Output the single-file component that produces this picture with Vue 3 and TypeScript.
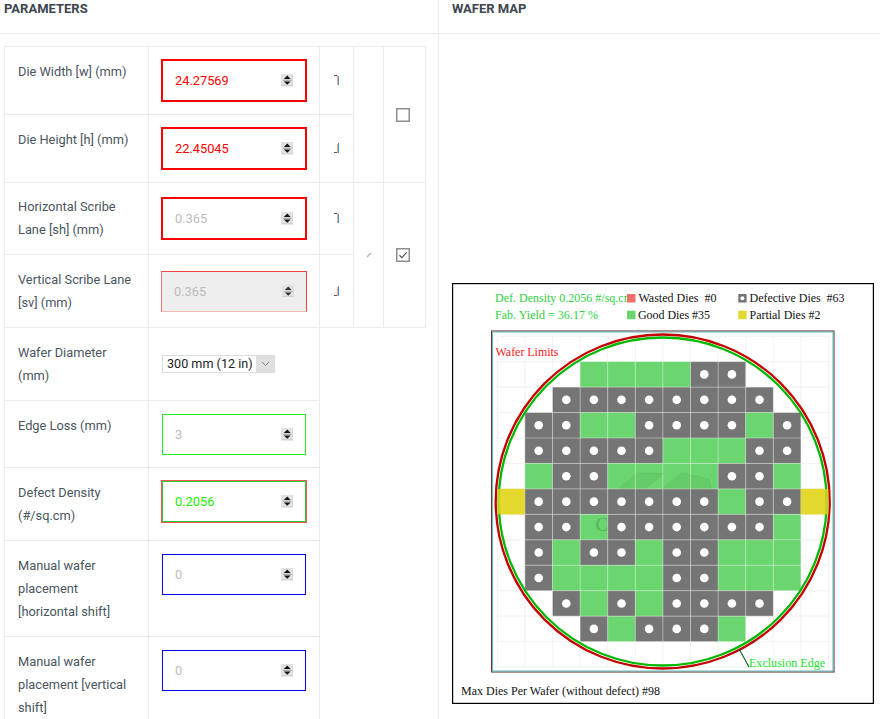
<script setup lang="ts">
type Cell = 'G' | 'D' | 'P' | '.'
const layout: string[] = [
  '............',
  '...GGGGDD...',
  '..DDDDDDDD..',
  '.DDGGDDDDGD.',
  '.DDDDDGGGDD.',
  '.GDDGGGGDDG.',
  'PDDDDDDDGDDP',
  '.DDGDDDDDDG.',
  '.DGDDGDDGGG.',
  '.DGGGGDDGGG.',
  '..DGDGDDDD..',
  '...DGDDDG...',
  '............',
]
const x0 = 497.3
const y0 = 336.2
const pw = 27.6
const ph = 25.45
const fills: Record<string, string> = { G: '#6bd56f', D: '#757575', P: '#e3d92d' }

const cells = layout.flatMap((row, r) =>
  row.split('').flatMap((c, i) =>
    (c as Cell) === '.' ? [] : [{ key: `${r}-${i}`, x: x0 + i * pw, y: y0 + r * ph, type: c, fill: fills[c] }],
  ),
)
const partials = cells.filter((c) => c.type === 'P')
const vLines = Array.from({ length: 13 }, (_, i) => x0 + i * pw)
const hLines = Array.from({ length: 14 }, (_, i) => y0 + i * ph)
const xEnd = x0 + 12 * pw
const yEnd = y0 + 13 * ph
</script>

<template>
  <div class="page">
    <svg class="defs" width="0" height="0">
      <symbol id="spin" viewBox="0 0 13 13">
        <rect width="13" height="13" fill="#e2e2e2" />
        <rect x="0" y="12" width="13" height="1" fill="#c4c4c4" />
        <rect x="12" y="0" width="1" height="13" fill="#cfcfcf" />
        <path d="M6.5 1.6L10 5.2H3Z" fill="#111" />
        <rect x="2" y="6" width="9" height="1" fill="#a0a0a0" />
        <path d="M6.5 11.2L10 7.8H3Z" fill="#111" />
      </symbol>
    </svg>

    <section class="panel left">
      <h2 class="head">PARAMETERS</h2>
      <table class="params">
        <colgroup>
          <col class="c1" /><col class="c2" /><col class="c3" /><col class="c4" /><col class="c5" />
        </colgroup>
        <tbody>
          <tr class="h68">
            <td class="lbl">Die Width [w] (mm)</td>
            <td class="fld">
              <div class="box"><input class="num ring-red txt-red" type="number" value="24.27569" /><svg class="spin"><use href="#spin" /></svg></div>
            </td>
            <td class="mid">
              <svg class="brk" width="6" height="11" viewBox="0 0 6 11"><path d="M0 .5H4" stroke="#555" fill="none" /><path d="M3.5 0V10" stroke="#e8b090" fill="none" /><path d="M4.5 1V10" stroke="#4a90d0" fill="none" /></svg>
            </td>
            <td class="mid" rowspan="2"></td>
            <td class="mid ck" rowspan="2">
              <svg class="chk" width="14" height="14" viewBox="0 0 14 14"><rect x=".75" y=".75" width="12.5" height="12.5" fill="#fff" stroke="#8f8f8f" stroke-width="1.5" /></svg>
            </td>
          </tr>
          <tr class="h68">
            <td class="lbl">Die Height [h] (mm)</td>
            <td class="fld">
              <div class="box"><input class="num ring-red txt-red" type="number" value="22.45045" /><svg class="spin"><use href="#spin" /></svg></div>
            </td>
            <td class="mid">
              <svg class="brk" width="6" height="11" viewBox="0 0 6 11"><path d="M0 9.5H4" stroke="#555" fill="none" /><path d="M3.5 1V10" stroke="#e8b090" fill="none" /><path d="M4.5 0V10" stroke="#4a90d0" fill="none" /></svg>
            </td>
          </tr>
          <tr class="h72">
            <td class="lbl tight">Horizontal Scribe Lane [sh] (mm)</td>
            <td class="fld middle">
              <div class="box"><input class="num ring-red txt-dim" type="number" value="0.365" /><svg class="spin"><use href="#spin" /></svg></div>
            </td>
            <td class="mid">
              <svg class="brk" width="6" height="11" viewBox="0 0 6 11"><path d="M0 .5H4" stroke="#555" fill="none" /><path d="M3.5 0V10" stroke="#e8b090" fill="none" /><path d="M4.5 1V10" stroke="#4a90d0" fill="none" /></svg>
            </td>
            <td class="mid" rowspan="2">
              <svg class="pen" width="6" height="6" viewBox="0 0 6 6"><path d="M1 5L5 1" stroke="#b8bec4" stroke-width="1.6" fill="none" /></svg>
            </td>
            <td class="mid ck" rowspan="2">
              <svg class="chk" width="14" height="14" viewBox="0 0 14 14"><rect x=".75" y=".75" width="12.5" height="12.5" fill="#fff" stroke="#8f8f8f" stroke-width="1.5" /><path d="M3.4 7.2L5.9 9.6L10.6 4.4" stroke="#555" stroke-width="1.2" fill="none" /></svg>
            </td>
          </tr>
          <tr class="h73">
            <td class="lbl">Vertical Scribe Lane [sv] (mm)</td>
            <td class="fld middle">
              <div class="box"><input class="num off" type="number" value="0.365" disabled /><svg class="spin spin-off"><use href="#spin" /></svg></div>
            </td>
            <td class="mid">
              <svg class="brk" width="6" height="11" viewBox="0 0 6 11"><path d="M0 9.5H4" stroke="#555" fill="none" /><path d="M3.5 1V10" stroke="#e8b090" fill="none" /><path d="M4.5 0V10" stroke="#4a90d0" fill="none" /></svg>
            </td>
          </tr>
          <tr class="h73">
            <td class="lbl">Wafer Diameter (mm)</td>
            <td class="fld middle">
              <div class="sel">
                <span class="sel-text">300 mm (12 in)</span>
                <span class="sel-btn">
                  <svg width="9" height="6" viewBox="0 0 9 6"><path d="M1 1L4.5 4.5L8 1" stroke="#888" fill="none" /></svg>
                </span>
              </div>
            </td>
          </tr>
          <tr class="h67">
            <td class="lbl">Edge Loss (mm)</td>
            <td class="fld">
              <div class="box"><input class="num line-green txt-dim" type="number" value="3" /><svg class="spin"><use href="#spin" /></svg></div>
            </td>
          </tr>
          <tr class="h73">
            <td class="lbl">Defect Density (#/sq.cm)</td>
            <td class="fld">
              <div class="box"><input class="num line-green ring-soft txt-green" type="number" value="0.2056" /><svg class="spin"><use href="#spin" /></svg></div>
            </td>
          </tr>
          <tr class="h96">
            <td class="lbl">Manual wafer placement [horizontal shift]</td>
            <td class="fld">
              <div class="box"><input class="num line-blue txt-dim" type="number" value="0" /><svg class="spin"><use href="#spin" /></svg></div>
            </td>
          </tr>
          <tr class="h96">
            <td class="lbl">Manual wafer placement [vertical shift]</td>
            <td class="fld">
              <div class="box"><input class="num line-blue txt-dim" type="number" value="0" /><svg class="spin"><use href="#spin" /></svg></div>
            </td>
          </tr>
        </tbody>
      </table>
    </section>

    <section class="panel right">
      <h2 class="head">WAFER MAP</h2>
      <div class="map-wrap">
        <svg class="map" width="422" height="421" viewBox="452 283 422 421">
          <rect x="452.6" y="283.6" width="420.8" height="419.8" fill="#fff" stroke="#000" stroke-width="1.2" />

          <text x="495" y="302" class="t green" textLength="138" lengthAdjust="spacing">Def. Density 0.2056 #/sq.cm</text>
          <text x="495" y="318.5" class="t green" textLength="103">Fab. Yield = 36.17 %</text>
          <rect x="627" y="294" width="8.5" height="8.5" fill="#f07070" />
          <text x="638.5" y="302" class="t" textLength="78">Wasted Dies&#160; #0</text>
          <rect x="738.3" y="294" width="8.3" height="8.5" fill="#757575" />
          <circle cx="742.4" cy="298.3" r="2" fill="#fff" />
          <text x="749.5" y="302" class="t" textLength="95">Defective Dies&#160; #63</text>
          <rect x="627" y="310.7" width="8.5" height="8.5" fill="#6bd56f" />
          <text x="638" y="318.5" class="t" textLength="72">Good Dies #35</text>
          <rect x="738.3" y="310.7" width="8.3" height="8.5" fill="#e3d92d" />
          <text x="749.5" y="318.5" class="t" textLength="71">Partial Dies #2</text>

          <rect x="491.6" y="331" width="342.4" height="341" fill="#fff" stroke="#5e1c1c" />
          <rect x="492.6" y="332" width="340.4" height="339" fill="none" stroke="#5cbcc0" />

          <g stroke="#f4f4f4">
            <line v-for="x in vLines" :key="'gv' + x" :x1="x" :x2="x" :y1="y0" :y2="yEnd" />
            <line v-for="y in hLines" :key="'gh' + y" :x1="x0" :x2="xEnd" :y1="y" :y2="y" />
          </g>

          <rect v-for="c in cells" :key="c.key" :x="c.x" :y="c.y" :width="pw" :height="ph" :fill="c.fill" />

          <g fill="#58b85c" fill-opacity=".28" stroke="#4da852" stroke-opacity=".35" stroke-width=".6">
            <path d="M619 488.5L637 473H664L646 488.5Z" />
            <path d="M662 488.5L682 473L709 479L711 488.5Z" />
          </g>
          <text x="595.5" y="530.5" class="wm">C</text>

          <g stroke="rgba(235,245,235,.42)">
            <line v-for="x in vLines" :key="'ov' + x" :x1="x" :x2="x" :y1="y0 + ph" :y2="y0 + 12 * ph" />
            <line v-for="y in hLines" :key="'oh' + y" :x1="x0" :x2="xEnd" :y1="y" :y2="y" />
          </g>

          <template v-for="c in cells" :key="'d' + c.key">
            <circle v-if="c.type === 'D'" :cx="c.x + pw / 2" :cy="c.y + ph / 2" r="4.3" fill="#fff" />
          </template>

          <circle cx="662.7" cy="501.5" r="167" fill="none" stroke="#c40000" stroke-width="2.3" />
          <circle cx="662.7" cy="501.5" r="164" fill="none" stroke="#00b800" stroke-width="2.3" />

          <rect v-for="c in partials" :key="'p' + c.key" :x="c.x" :y="c.y" :width="pw" :height="ph" :fill="c.fill" fill-opacity=".8" />

          <text x="495.5" y="356" class="t red" textLength="63">Wafer Limits</text>
          <line x1="739.3" y1="649.3" x2="749" y2="667" stroke="#0b6b2b" stroke-width="1.2" />
          <text x="749" y="667" class="t lime" textLength="76">Exclusion Edge</text>
          <text x="461" y="694.5" class="t" textLength="199">Max Dies Per Wafer (without defect) #98</text>
        </svg>
      </div>
    </section>
  </div>
</template>

<style>
html,
body {
  margin: 0;
  overflow: hidden;
  background: #fff;
}
</style>

<style scoped>
.page {
  display: grid;
  grid-template-columns: 439px 441px;
  width: 880px;
  height: 719px;
  overflow: hidden;
  font-family: Roboto, "Liberation Sans", sans-serif;
  color: #4a5560;
  background: #fff;
}
.defs {
  position: absolute;
}
.left {
  border-right: 1px solid #e9ecef;
}
.head {
  box-sizing: border-box;
  height: 34px;
  margin: 0;
  padding: 1px 0 0 4px;
  border-bottom: 1px solid #e9ecef;
  font-size: 13px;
  line-height: 15px;
  font-weight: 700;
  color: #3c4650;
}
.right .head {
  padding-left: 13px;
}
.params {
  width: 421px;
  margin: 12px 0 0 4px;
  border-collapse: collapse;
  table-layout: fixed;
  font-size: 12.8px;
  line-height: 23px;
}
.c1 { width: 144px; }
.c2 { width: 171px; }
.c3 { width: 34px; }
.c4 { width: 30px; }
.c5 { width: 42px; }
.h67 { height: 67px; }
.h68 { height: 68px; }
.h72 { height: 72px; }
.h73 { height: 73px; }
.h96 { height: 96px; }
td {
  box-sizing: border-box;
  border: 1px solid #e9ecef;
  padding: 13px 13px 0;
  vertical-align: top;
}
.lbl.tight {
  padding-top: 12px;
}
.fld {
  padding: 13px 12px 0;
  font-size: 0;
  line-height: 0;
}
.fld.middle {
  vertical-align: middle;
  padding-top: 0;
  padding-bottom: 0;
}
.mid {
  padding: 0;
  text-align: center;
  vertical-align: middle;
}
.ck {
  padding-right: 3px;
}
.brk,
.pen,
.chk {
  display: block;
  margin: 0 auto;
}
.box {
  position: relative;
}
.spin {
  position: absolute;
  top: 14px;
  right: 14px;
  width: 12.5px;
  height: 12.5px;
}
.spin-off {
  right: 13px;
  opacity: 0.85;
}
.num {
  box-sizing: border-box;
  display: block;
  width: 144px;
  height: 41px;
  margin: 0 0 0 1px;
  padding: 0 12px;
  border: 1px solid #ccc;
  border-radius: 0;
  outline: none;
  background: #fff;
  font-family: Roboto, "Liberation Sans", sans-serif;
  font-size: 12.8px;
  appearance: textfield;
}
.num::-webkit-inner-spin-button,
.num::-webkit-outer-spin-button {
  -webkit-appearance: none;
  margin: 0;
}
.ring-red {
  border-color: #ff0000;
  box-shadow: 0 0 0 1px #ff0000;
}
.line-green {
  border-color: #22ee22;
}
.line-blue {
  border-color: #0000ee;
}
.ring-soft {
  border-color: #22cc33;
  box-shadow: 0 0 0 1px #ff5555;
}
.txt-red {
  color: #ff0000;
}
.txt-dim {
  color: #bcbcbc;
}
.txt-green {
  color: #22ee00;
}
.off {
  width: 146px;
  margin-left: 0;
  background: #eeeeee;
  color: #bcbcbc;
  border-color: #f04040 #f04040 #f8b8b8 #f07070;
}
.sel {
  display: flex;
  align-items: stretch;
  box-sizing: border-box;
  width: 113px;
  height: 18px;
  margin-left: 1px;
  border: 1px solid #dddddd;
  background: #fff;
  font-size: 12.6px;
  line-height: 16px;
  color: #222;
}
.sel-text {
  flex: 1;
  padding-left: 4px;
  white-space: nowrap;
}
.sel-btn {
  display: flex;
  align-items: center;
  justify-content: center;
  width: 18px;
  border-left: 1px solid #fff;
  background: #e0e0e0;
}
.map-wrap {
  margin: 249px 0 0 13px;
}
.map {
  display: block;
}
.t {
  font-family: "Liberation Serif", serif;
  font-size: 12px;
  fill: #111;
  white-space: pre;
}
.green { fill: #2fcf3f; }
.lime { fill: #22e030; }
.red { fill: #ff2020; }
.wm {
  font-family: "Liberation Serif", serif;
  font-size: 19px;
  fill: #56b45c;
}
</style>
